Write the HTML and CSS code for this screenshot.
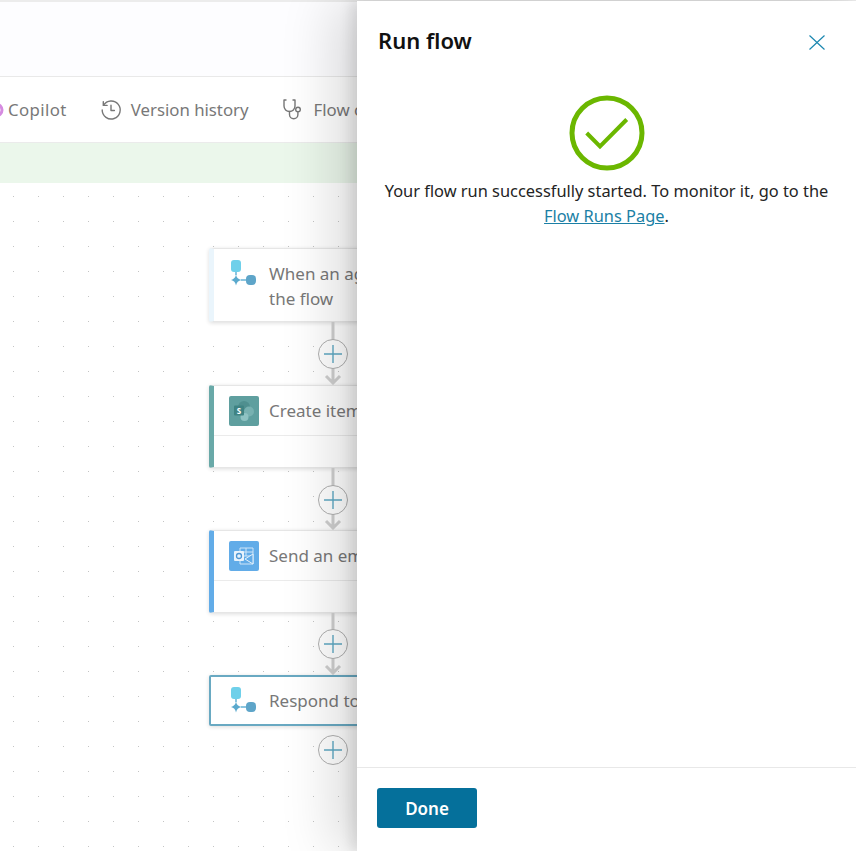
FILE: index.html
```html
<!DOCTYPE html>
<html lang="en">
<head>
    <meta charset="UTF-8">
    <title>Run flow</title>
    <link rel="stylesheet" href="styles.css">
</head>
<body>
<div class="page">
    <div class="titlebar"></div>
    <div class="toolbar">
        <div class="tool tool-copilot">
            <svg class="copilot-icon" width="16" height="20" viewBox="0 0 16 20"><circle cx="8" cy="10" r="6" fill="none" stroke="#d58be0" stroke-width="3"/></svg>
            <span>Copilot</span>
        </div>
        <div class="tool tool-history">
            <svg width="22" height="22" viewBox="0 0 22 22" fill="none" stroke="#777" stroke-width="1.4" stroke-linecap="round" stroke-linejoin="round"><path d="M3.6 6.2A9 9 0 1 1 2.2 11"/><path d="M3.3 2.6v3.8h3.8"/><path d="M11 6.2V11.500h3.400"/></svg>
            <span>Version history</span>
        </div>
        <div class="tool">
            <svg width="22" height="24" viewBox="0 0 22 24" fill="none" stroke="#777" stroke-width="1.4" stroke-linecap="round" stroke-linejoin="round"><path d="M4 2H2v6a5.500 5.500 0 0 0 11 0V2h-2"/><path d="M7.500 13.500v3a4.200 4.200 0 0 0 8.400 0v-2"/><circle cx="16" cy="11.500" r="2.300"/></svg>
            <span>Flow checker</span>
        </div>
    </div>
    <div class="notice"></div>
    <div class="canvas">
        <div class="card card-trigger">
            <div class="card-head card-head-tall">
                <svg class="flow-icon" width="26" height="28" viewBox="0 0 26 28"><rect x="0" y="0" width="10" height="12" rx="3" fill="#6fd0ea"/><path d="M4.200 12h1.600v3H4.200z" fill="#6fb7d8"/><path d="M5 14.500q.8 4.700 5.500 5.500-4.700.8-5.500 5.500-.8-4.700-5.500-5.500 4.700-.8 5.500-5.500z" fill="#5aa9cd"/><path d="M10 19.200h6v1.600h-6z" fill="#6fb7d8"/><rect x="15" y="15" width="10" height="10" rx="4" fill="#5ea5c9"/></svg>
                <span class="card-title">When an agent calls<br>the flow</span>
            </div>
        </div>
        <div class="link">
            <svg width="30" height="63" viewBox="0 0 30 63"><path d="M15 0v61M8 54l7 7 7-7" fill="none" stroke="#cfcfcf" stroke-width="3"/><circle cx="15" cy="32" r="14.500" fill="#fff" stroke="#b0b0b0"/><path d="M15 23v18M6 32h18" stroke="#5fa9c4" stroke-width="1.400"/></svg>
        </div>
        <div class="card card-action card-teal">
            <div class="card-head">
                <svg class="app-icon" width="30" height="30" viewBox="0 0 30 30"><rect width="30" height="30" rx="2" fill="#5f9f9f"/><circle cx="15" cy="11" r="6" fill="#4f8f8f"/><circle cx="20" cy="15.500" r="5" fill="#78b1b1"/><circle cx="15.500" cy="21" r="4" fill="#8fc3c3"/><rect x="5" y="9.500" width="10" height="10" rx="1" fill="#3f8383"/><text x="10" y="17.500" class="app-letter">S</text></svg>
                <span class="card-title">Create item</span>
            </div>
            <div class="card-body"></div>
        </div>
        <div class="link link-short">
            <svg width="30" height="62" viewBox="0 0 30 62"><path d="M15 0v60M8 53l7 7 7-7" fill="none" stroke="#cfcfcf" stroke-width="3"/><circle cx="15" cy="32" r="14.500" fill="#fff" stroke="#b0b0b0"/><path d="M15 23v18M6 32h18" stroke="#5fa9c4" stroke-width="1.400"/></svg>
        </div>
        <div class="card card-action card-blue">
            <div class="card-head">
                <svg class="app-icon" width="30" height="30" viewBox="0 0 30 30"><rect width="30" height="30" rx="2" fill="#62ace8"/><path d="M11 7h13v16H11z" fill="none" stroke="#cfe5f8"/><path d="M11 11h13M11 15h13M17 7v8" stroke="#cfe5f8"/><path d="M24 13l-8 5 8 5z" fill="#62ace8" stroke="#e5f1fb"/><rect x="5" y="10" width="10" height="10" rx="1" fill="#e9f3fc"/><circle cx="10" cy="15" r="2.500" fill="none" stroke="#4f97d4" stroke-width="1.300"/></svg>
                <span class="card-title">Send an email</span>
            </div>
            <div class="card-body"></div>
        </div>
        <div class="link link-short">
            <svg width="30" height="62" viewBox="0 0 30 62"><path d="M15 0v60M8 53l7 7 7-7" fill="none" stroke="#cfcfcf" stroke-width="3"/><circle cx="15" cy="31" r="14.500" fill="#fff" stroke="#b0b0b0"/><path d="M15 22v18M6 31h18" stroke="#5fa9c4" stroke-width="1.400"/></svg>
        </div>
        <div class="card card-selected">
            <div class="card-head card-head-last">
                <svg class="flow-icon" width="26" height="28" viewBox="0 0 26 28"><rect x="0" y="0" width="10" height="12" rx="3" fill="#6fd0ea"/><path d="M4.200 12h1.600v3H4.200z" fill="#6fb7d8"/><path d="M5 14.500q.8 4.700 5.500 5.500-4.700.8-5.500 5.500-.8-4.700-5.500-5.500 4.700-.8 5.500-5.500z" fill="#5aa9cd"/><path d="M10 19.200h6v1.600h-6z" fill="#6fb7d8"/><rect x="15" y="15" width="10" height="10" rx="4" fill="#5ea5c9"/></svg>
                <span class="card-title">Respond to the agent</span>
            </div>
        </div>
        <div class="link link-end">
            <svg width="30" height="30" viewBox="0 0 30 30"><circle cx="15" cy="15" r="14.500" fill="#fff" stroke="#b0b0b0"/><path d="M15 6v18M6 15h18" stroke="#5fa9c4" stroke-width="1.400"/></svg>
        </div>
    </div>
</div>

<aside class="panel">
    <div class="panel-head">
        <h1>Run flow</h1>
        <svg class="close" width="16" height="15" viewBox="0 0 16 15"><path d="M.5.500l15 14M15.500.500l-15 14" fill="none" stroke="#1b87b0" stroke-width="1.200"/></svg>
    </div>
    <div class="panel-body">
        <svg class="check" width="76" height="76" viewBox="0 0 76 76" fill="none" stroke="#6bb700"><circle cx="38" cy="38" r="35" stroke-width="5"/><path d="M17.700 38L31 51.500 57.700 24.500" stroke-width="4"/></svg>
        <p>Your flow run successfully started. To monitor it, go to the <a href="#">Flow Runs Page</a>.</p>
    </div>
    <div class="panel-foot">
        <button class="done">Done</button>
    </div>
</aside>
</body>
</html>
```

FILE: styles.css
```css
*{
    margin: 0;
    padding: 0;
    box-sizing: border-box;
}
html,body{
    height: 100%;
    overflow: hidden;
}
body{
    font-family: "Noto Sans", "Open Sans", sans-serif;
    background-color: #fff;
    color: #1a1a1a;
}
.page{
    height: 851px;
    display: flex;
    flex-direction: column;
    border-top: 2px solid #ececec;
}
.titlebar{
    height: 75px;
    background-color: #fdfdff;
    border-bottom: 1px solid #e9e9e9;
}
.toolbar{
    height: 66px;
    display: flex;
    align-items: center;
    border-bottom: 1px solid #ebebeb;
    font-size: 16.800px;
    color: #787878;
    white-space: nowrap;
}
.tool{
    display: flex;
    align-items: center;
    gap: 10px;
}
.tool-copilot{
    margin-left: -12px;
    gap: 4px;
    margin-right: 33px;
    letter-spacing: .4px;
}
.tool-history{
    gap: 9px;
    margin-right: 33px;
}
.notice{
    height: 40px;
    background-color: #ebf7eb;
}
.canvas{
    flex: 1;
    padding: 65px 0 0 209px;
    background-image: radial-gradient(circle, #c4c4c4 .7px, transparent 1px);
    background-size: 25px 25px;
    background-position: 1px 1px;
}
.card{
    width: 340px;
    background-color: #fff;
    border: 1px solid #e6e6e6;
    border-radius: 2px;
    box-shadow: 0 1px 4px rgba(0,0,0,.14);
}
.card-trigger{
    border-left: 5px solid #eaf5fc;
}
.card-action{
    height: 83px;
    border-left-width: 5px;
}
.card-teal{
    border-left-color: #69a9a8;
}
.card-blue{
    border-left-color: #62ace8;
}
.card-selected{
    border: 2px solid #69a9c2;
}
.card-head{
    display: flex;
    align-items: center;
    height: 49px;
    padding-left: 15px;
    gap: 10px;
}
.card-head-tall{
    height: 72px;
    align-items: flex-start;
    padding-top: 11px;
    padding-left: 17px;
    gap: 12px;
}
.card-head-tall .card-title{
    margin-top: 1px;
}
.card-head-last{
    height: 47px;
    padding-left: 20px;
    gap: 12px;
}
.card-body{
    height: 32px;
    border-top: 1px solid #ebebeb;
}
.card-title{
    font-size: 17px;
    line-height: 25px;
    color: #787878;
    white-space: nowrap;
}
.app-letter{
    font-size: 8px;
    font-weight: bold;
    fill: #fff;
    text-anchor: middle;
}
.link{
    height: 63px;
    margin-left: 109px;
}
.link svg{
    display: block;
}
.link-short{
    height: 62px;
}
.link-end{
    height: 30px;
    margin-top: 9px;
}

/* side panel over the designer */
.panel{
    position: absolute;
    top: 1px;
    right: 0;
    bottom: 0;
    width: 499px;
    display: flex;
    flex-direction: column;
    background-color: #fff;
    box-shadow: -6px 0 12px rgba(0,0,0,.1), -24px 0 50px rgba(0,0,0,.14);
}
.panel-head{
    height: 80px;
    display: flex;
    justify-content: space-between;
    align-items: flex-start;
    padding: 23px 31px 0 21px;
}
.panel-head h1{
    font-size: 22px;
    line-height: 32px;
    font-weight: 600;
    color: #111;
}
.close{
    margin-top: 11px;
}
.panel-body{
    flex: 1;
    display: flex;
    flex-direction: column;
    align-items: center;
    padding-top: 14px;
}
.panel-body p{
    width: 470px;
    margin-top: 7px;
    font-size: 16.400px;
    line-height: 25px;
    text-align: center;
    color: #242424;
}
.panel-body a{
    color: #1b7fa5;
}
.panel-foot{
    height: 84px;
    border-top: 1px solid #e8e8e8;
    padding: 20px;
}
.done{
    width: 100px;
    height: 40px;
    border: 0;
    border-radius: 3px;
    background-color: #05709b;
    color: #fff;
    font-family: inherit;
    font-size: 17px;
    font-weight: 600;
}
```
